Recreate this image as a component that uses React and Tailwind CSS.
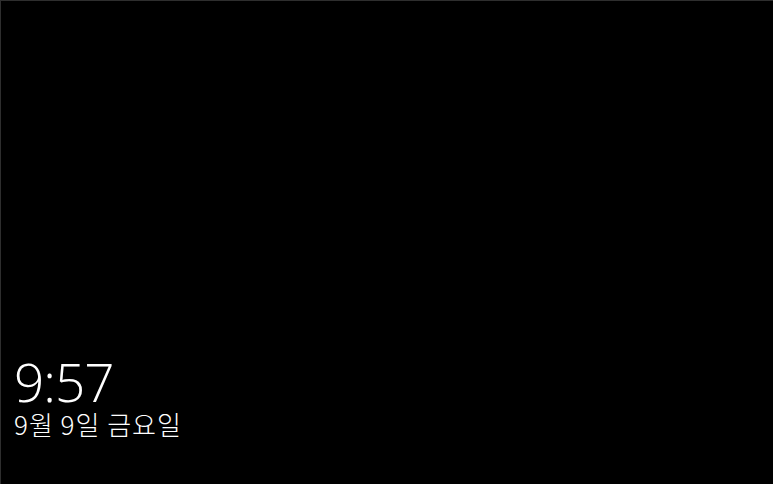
export default function App() {
  return (
    <div className="h-screen w-screen bg-black border-t border-l border-[#2e2e2e] flex flex-col justify-end pl-[13px] pb-[45px] text-white overflow-hidden">
      <div className="font-['Open_Sans','Noto_Sans',sans-serif] text-[53px] leading-[54px] font-light tracking-[-1px]">
        9:57
      </div>
      <div className="font-['Noto_Sans_CJK_KR','Noto_Sans',sans-serif] text-[26px] leading-[30px] font-light tracking-[1px]">
        9월 9일 금요일
      </div>
    </div>
  );
}
